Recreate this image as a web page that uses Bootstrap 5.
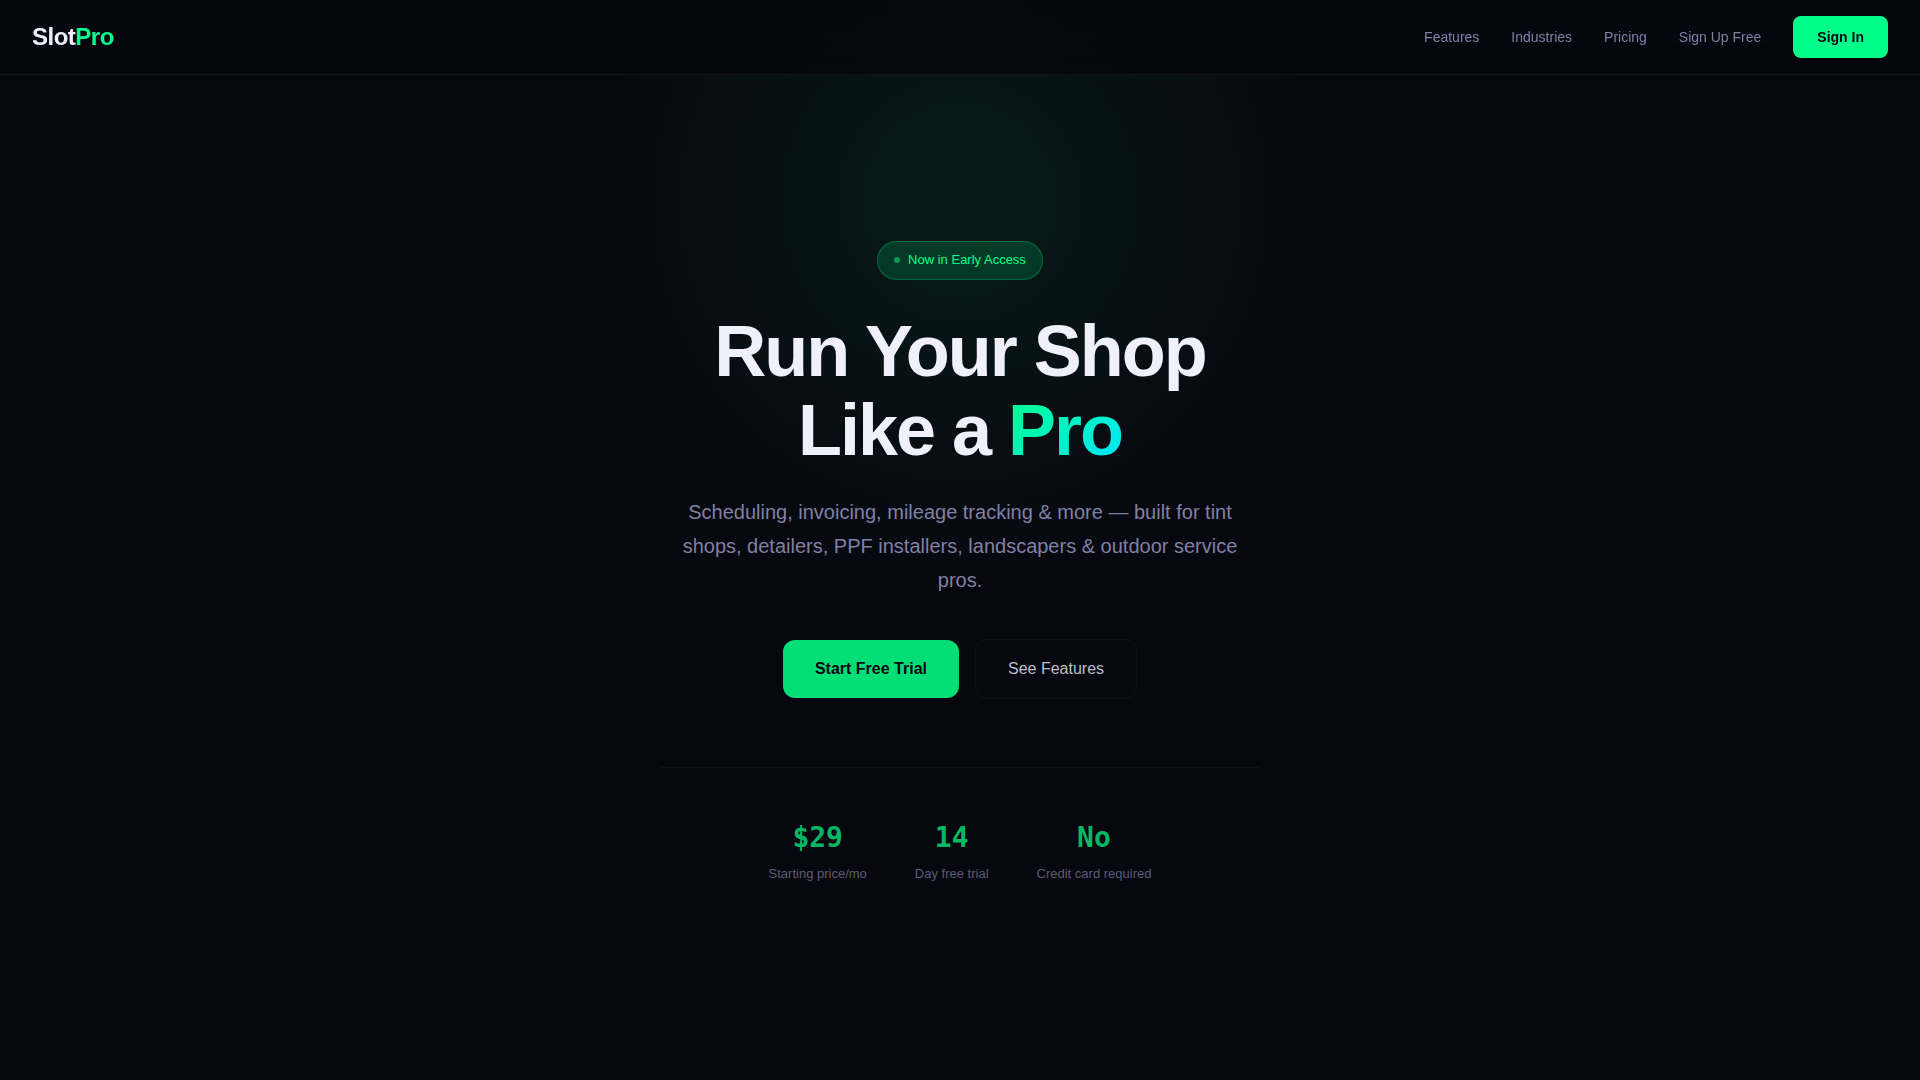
<!DOCTYPE html>
<html lang="en">
<head>
<meta charset="utf-8">
<meta name="viewport" content="width=device-width, initial-scale=1">
<title>SlotPro</title>
<link rel="stylesheet" href="https://cdn.jsdelivr.net/npm/bootstrap@5.3.0/dist/css/bootstrap.min.css">
<style>
  body { background: #07070f; color: #f0f0fa; font-family: "Liberation Sans", Arial, sans-serif; line-height: 1.6; overflow-x: hidden; }
  a { text-decoration: none; }
  .site-nav { background: rgba(6, 6, 14, .85); backdrop-filter: blur(20px); border-bottom: 1px solid rgba(255, 255, 255, .06); padding: 16px 32px; }
  .site-nav .navbar-brand { color: #f0f0fa; font-size: 24px; font-weight: 700; letter-spacing: -.5px; line-height: 38px; padding: 0; margin: 0; }
  .site-nav .navbar-brand span { color: #00ff88; }
  .site-nav .site-links { gap: 32px; }
  .site-nav .site-links .nav-link { color: #8080a5; font-size: 14px; padding: 0; }
  .btn-signin, .btn-signin:hover { background: #00ff88; color: #06060f; border: 0; border-radius: 8px; font-size: 14px; font-weight: 600; line-height: 22px; padding: 10px 24px; }
  .hero { min-height: 100vh; padding: 120px 24px 76px; overflow: hidden; }
  .hero-glow { position: absolute; top: -200px; left: 50%; width: 800px; height: 800px; margin-left: -400px; background: radial-gradient(circle, rgba(0, 255, 136, .08) 0%, transparent 70%); pointer-events: none; }
  .hero-body { width: 100%; max-width: 600px; }
  .early-pill { background: rgba(0, 255, 136, .15); border: 1px solid rgba(0, 255, 136, .25); color: #00ff88; border-radius: 20px; font-size: 13px; line-height: 21px; padding: 7px 16px 9px; margin-bottom: 32px; }
  .early-dot { width: 6px; height: 6px; border-radius: 50%; background: #00ff88; opacity: .5; margin-top: 2px; }
  .hero h1 { font-size: 72px; font-weight: 700; line-height: 79px; letter-spacing: -2px; margin-bottom: 25px; color: #f0f0fa; }
  .hero h1 span { background: linear-gradient(135deg, #00ff88, #00e5ff); -webkit-background-clip: text; background-clip: text; color: transparent; }
  .hero-text { font-size: 20px; line-height: 34px; color: #8080a5; max-width: 560px; margin-bottom: 42px; }
  .btn-cta { border-radius: 12px; font-size: 16px; line-height: 26px; padding: 16px 32px; }
  .btn-cta.btn-start, .btn-cta.btn-start:hover { background: #03de77; color: #06060f; border: 0; font-weight: 600; }
  .btn-cta.btn-more, .btn-cta.btn-more:hover { background: transparent; color: #bfbfc9; border: 1px solid rgba(255, 255, 255, .04); }
  .stat-row { border-top: 1px solid rgba(255, 255, 255, .04); margin-top: 68px; padding-top: 47px; gap: 48px; }
  .stat-num { font-family: "DejaVu Sans Mono", monospace; font-size: 28px; font-weight: 700; line-height: 45px; color: #03b865; }
  .stat-label { font-size: 13px; line-height: 21px; color: #5c5c77; margin-top: 3px; }
</style>
</head>
<body>
<nav class="site-nav navbar navbar-expand fixed-top">
  <a class="navbar-brand" href="#">Slot<span>Pro</span></a>
  <div class="site-links d-flex ms-auto align-items-center">
    <a class="nav-link" href="#features">Features</a>
    <a class="nav-link" href="#industries">Industries</a>
    <a class="nav-link" href="#pricing">Pricing</a>
    <a class="nav-link" href="#signup">Sign Up Free</a>
    <a class="btn btn-signin" href="#signin">Sign In</a>
  </div>
</nav>
<main class="hero position-relative d-flex flex-column align-items-center justify-content-center text-center">
  <div class="hero-glow"></div>
  <div class="hero-body position-relative d-flex flex-column align-items-center">
    <div class="early-pill d-inline-flex align-items-center gap-2"><span class="early-dot"></span><span>Now in Early Access</span></div>
    <h1>Run Your Shop<br>Like a <span>Pro</span></h1>
    <p class="hero-text">Scheduling, invoicing, mileage tracking &amp; more — built for tint shops, detailers, PPF installers, landscapers &amp; outdoor service pros.</p>
    <div class="d-flex flex-wrap align-items-center justify-content-center gap-3">
      <a class="btn btn-cta btn-start" href="#signup">Start Free Trial</a>
      <a class="btn btn-cta btn-more" href="#features">See Features</a>
    </div>
    <div class="stat-row d-flex flex-wrap justify-content-center w-100">
      <div><div class="stat-num">$29</div><div class="stat-label">Starting price/mo</div></div>
      <div><div class="stat-num">14</div><div class="stat-label">Day free trial</div></div>
      <div><div class="stat-num">No</div><div class="stat-label">Credit card required</div></div>
    </div>
  </div>
</main>
<script src="https://cdn.jsdelivr.net/npm/bootstrap@5.3.0/dist/js/bootstrap.bundle.min.js"></script>
</body>
</html>
